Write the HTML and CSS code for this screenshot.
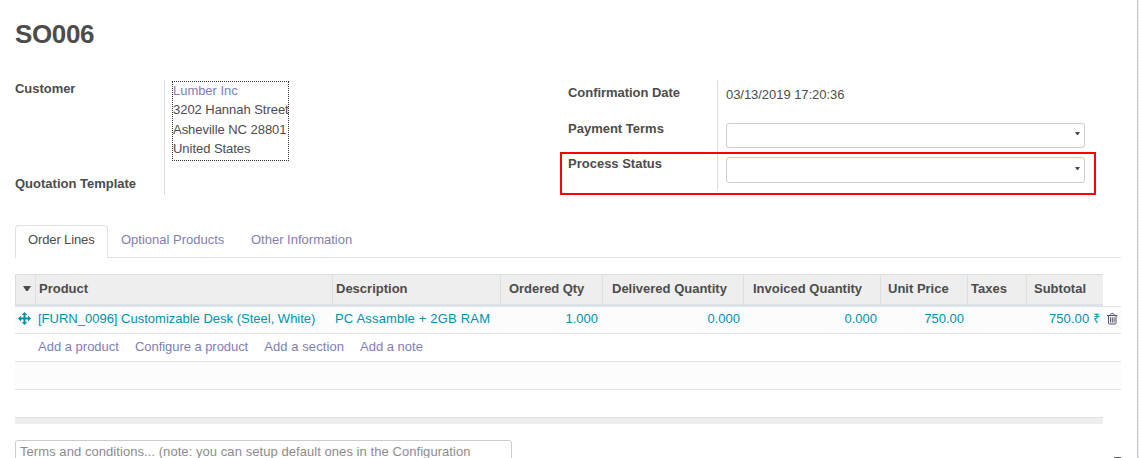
FILE: index.html
```html
<!DOCTYPE html>
<html lang="en">
<head>
<meta charset="utf-8">
<title>SO006</title>
<link rel="stylesheet" href="styles.css">
</head>
<body>
<main class="sheet">
  <h1 class="title">SO006</h1>
  <div class="groups">
    <section class="group group-left">
      <div class="labels">
        <div class="label label-customer">Customer</div>
        <div class="label">Quotation Template</div>
      </div>
      <div class="values">
        <div class="address"><a>Lumber Inc</a><br>3202 Hannah Street<br>Asheville NC 28801<br>United States</div>
      </div>
    </section>
    <section class="group group-right">
      <div class="labels">
        <div class="label label-date">Confirmation Date</div>
        <div class="label label-terms">Payment Terms</div>
        <div class="label">Process Status</div>
      </div>
      <div class="values">
        <div class="date">03/13/2019 17:20:36</div>
        <div class="select select-terms"><i class="caret"></i></div>
        <div class="select select-status"><i class="caret"></i></div>
      </div>
      <div class="highlight"></div>
    </section>
  </div>
  <nav class="tabs">
    <a class="tab active">Order Lines</a>
    <a class="tab">Optional Products</a>
    <a class="tab other">Other Information</a>
  </nav>
  <div class="table">
    <div class="row head">
      <div class="cell pick"><i class="caret big"></i></div>
      <div class="cell">Product</div>
      <div class="cell">Description</div>
      <div class="cell qty">Ordered Qty</div>
      <div class="cell wide">Delivered Quantity</div>
      <div class="cell wide">Invoiced Quantity</div>
      <div class="cell unit">Unit Price</div>
      <div class="cell">Taxes</div>
      <div class="cell unit">Subtotal</div>
    </div>
    <div class="row line">
      <div class="cell handle"><svg width="14" height="14" viewBox="0 0 14 14"><path d="M6.5 0 9.3 3H7.5v2.6H10V3.8L13 6.6 10 9.4V7.6H7.5v2.6h1.8L6.5 13 3.7 10.200h1.8V7.600H3v1.800L0 6.600 3 3.800v1.800h2.500V3H3.700z"/></svg></div>
      <div class="cell product">[FURN_0096] Customizable Desk (Steel, White)</div>
      <div class="cell description">PC Assamble + 2GB RAM</div>
      <div class="cell num tight">1.000</div>
      <div class="cell num">0.000</div>
      <div class="cell num">0.000</div>
      <div class="cell num">750.00</div>
      <div class="cell"></div>
      <div class="cell num money">750.00 ₹</div>
      <div class="cell trash"><svg width="11" height="12" viewBox="0 0 11 12"><path d="M0 2.500h10.500M3.500 2.300V1.500q0-.9.900-.9h1.700q.9 0 .9.900v.8M1.500 2.700v7.300q0 1 1 1h5.500q1 0 1-1V2.700M3.500 4.300v5.200M5.300 4.300v5.200M7.100 4.300v5.200"/></svg></div>
    </div>
    <div class="row-add"><a>Add a product</a><a class="configure">Configure a product</a><a class="section">Add a section</a><a>Add a note</a></div>
    <div class="row-empty odd"></div>
    <div class="row-empty"></div>
    <div class="foot"></div>
  </div>
  <div class="bottom">
    <div class="terms">Terms and conditions... (note: you can setup default ones in the Configuration</div>
    <div class="total-mark"></div>
  </div>
</main>
</body>
</html>
```
FILE: styles.css
```css
* { box-sizing: border-box; }
body {
  margin: 0;
  height: 458px;
  overflow: hidden;
  background: repeating-linear-gradient(#e2e2e9 0 2px, #f4f4f7 2px 4px);
  color: #4c4c4c;
  font: 13px/19.5px "Liberation Sans", Arial, sans-serif;
}
a { color: #7f7eb3; }
.sheet {
  width: 1138px;
  height: 458px;
  overflow: hidden;
  padding: 14px 16px 0 15px;
  background: #fff;
  border-right: 1px solid #c8c8d3;
}
.title { margin: 0; height: 66px; font-size: 26px; line-height: 40px; font-weight: bold; letter-spacing: -.35px; }
.groups { display: flex; height: 145px; }
.group { display: flex; align-items: flex-start; }
.group-left { width: 553px; }
.group-right { position: relative; }
.labels { width: 149px; }
.label { font-weight: bold; white-space: nowrap; }
.label-customer, .label-date { letter-spacing: -.04px; }
.values { border-left: 1px solid #ddd; }
.group-left .values { height: 115px; padding: 1px 0 0 7px; }
.group-right .values { height: 110px; padding-left: 8px; }
.label-customer { margin-top: -1px; height: 95px; }
.address { width: 117px; height: 80px; border: 1px dotted #333; letter-spacing: -.04px; line-height: 19.4px; white-space: nowrap; }
.address::before { content: ""; display: block; margin-top: -1px; }
.label-date { padding-top: 3px; height: 39px; }
.label-terms { height: 35px; }
.date { padding-top: 5px; height: 43px; letter-spacing: -.05px; }
.select {
  display: flex;
  justify-content: flex-end;
  width: 359px;
  border: 1px solid #ccc;
  border-radius: 3px;
}
.select-terms { height: 25px; padding: 8px 4px 0 0; }
.select-status { height: 26px; margin-top: 9px; padding: 9px 4px 0 0; }
.caret { display: block; width: 5px; height: 3px; background: #4c4c4c; clip-path: polygon(0 0, 100% 0, 60% 100%, 40% 100%); }
.big { width: 8px; height: 5px; }
.highlight {
  position: absolute;
  left: -8px;
  top: 72px;
  width: 536px;
  height: 43px;
  border: 2px solid #f00;
}
.tabs { display: flex; height: 33px; width: 1106px; border-bottom: 1px solid #dee2e6; }
.tab { height: 33px; padding: 4px 13px 0; border: 1px solid transparent; border-bottom: 0; white-space: nowrap; }
.active { width: 93px; padding-left: 12px; padding-right: 0; color: #4c4c4c; background: #fff; border-color: #dee2e6; border-radius: 4px 4px 0 0; letter-spacing: -.12px; }
.active + .tab { width: 129px; padding: 4px 0 0 12px; }
.other { padding-left: 13px; }
.table { margin-top: 16px; width: 1106px; }
.row { display: grid; grid-template-columns: 20px 297px 168px 102px 141px 137px 87px 59px 77px 18px; }
.cell { padding-left: 3px; white-space: nowrap; }
.head {
  width: 1088px;
  height: 32px;
  grid-template-columns: 20px 297px 168px 102px 141px 137px 87px 59px 77px;
  background: #eee;
  border-top: 1px solid #dfdfe2;
  border-bottom: 2px solid #dee2e6;
  font-weight: bold;
}
.head .cell { padding-top: 4px; border-left: 1px solid #dcdfe2; }
.head .pick { padding: 11px 0 0 7px; }
.head .qty { padding-left: 8px; letter-spacing: -.05px; }
.head .wide { padding-left: 9px; }
.head .unit { padding-left: 7px; }
.line { height: 28px; padding-top: 2px; background: #fcfcfc; border-top: 1px solid #dee2e6; border-bottom: 1px solid #dee2e6; color: #0092ab; }
.description { letter-spacing: .18px; }
.num { padding-right: 3px; text-align: right; }
.tight { padding-right: 4px; }
.money { letter-spacing: .08px; }
.line .handle { padding: 3px 0 0 3px; }
.line svg { display: block; }
.handle svg { fill: #0092ab; }
.line .trash { padding: 4px 0 0 4px; }
.trash svg { fill: none; stroke: #54546b; stroke-width: 1; }
.row-add { display: flex; gap: 16px; height: 28px; padding: 3px 0 0 23px; border-bottom: 1px solid #dee2e6; }
.configure { letter-spacing: -.05px; }
.section { letter-spacing: .08px; }
.row-empty { height: 28px; border-bottom: 1px solid #dee2e6; }
.row-empty:not(.odd) { height: 27px; border: 0; }
.odd { background: #fcfcfc; }
.foot { width: 1088px; height: 7px; background: #eee; border-top: 1px solid #dee2e6; }
.bottom { display: flex; justify-content: space-between; align-items: flex-start; width: 1106px; margin-top: 16px; }
.terms { width: 497px; height: 50px; padding: 1px 4px; border: 1px solid #ccc; border-radius: 3px; color: #8c8c8c; letter-spacing: .06px; white-space: nowrap; }
.total-mark { width: 7px; height: 1px; margin-top: 17px; background: #666; }
```
